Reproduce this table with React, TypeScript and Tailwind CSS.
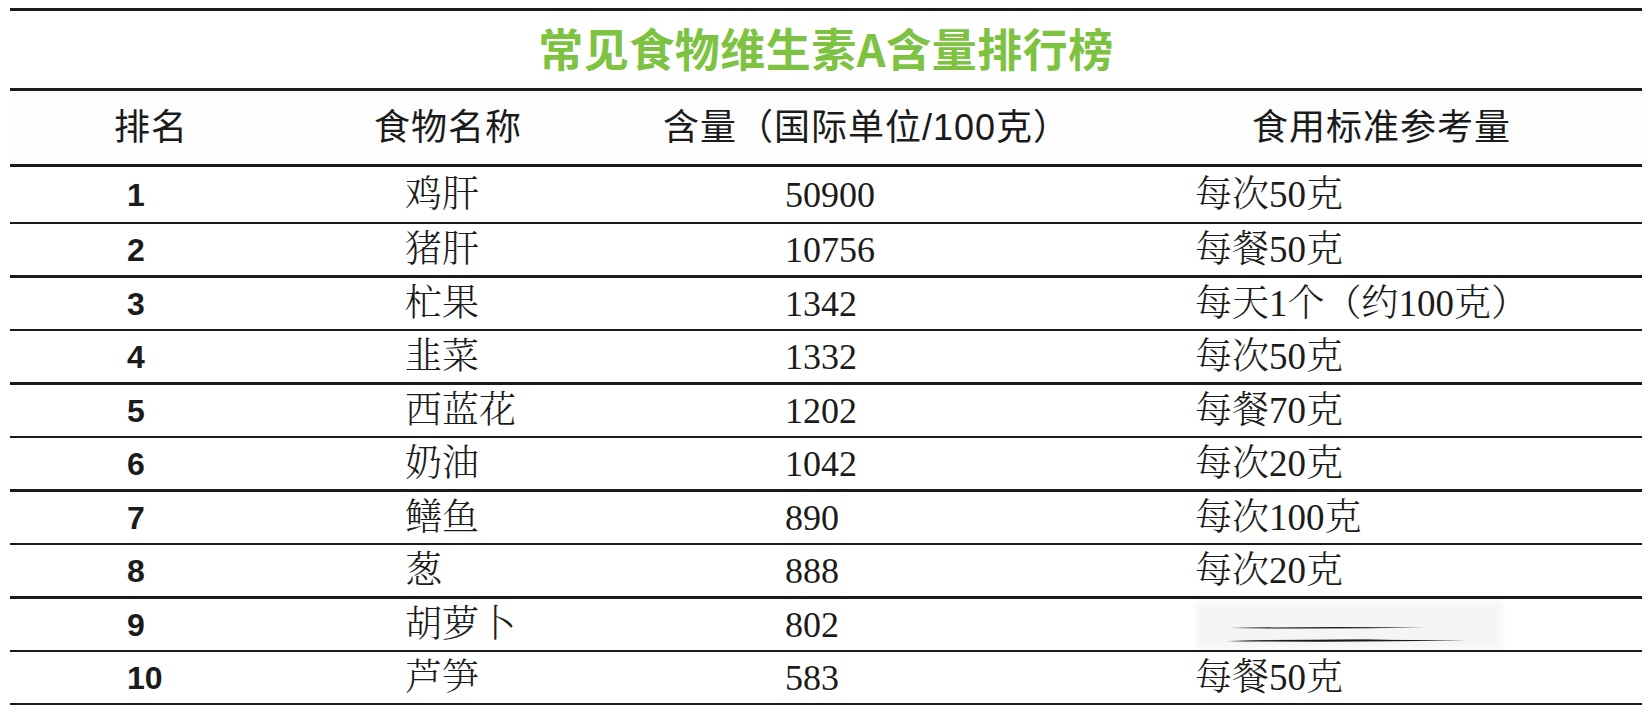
import React from "react";

const rows: [string, string, string, string | null][] = [
  ["1", "鸡肝", "50900", "每次50克"],
  ["2", "猪肝", "10756", "每餐50克"],
  ["3", "杧果", "1342", "每天1个（约100克）"],
  ["4", "韭菜", "1332", "每次50克"],
  ["5", "西蓝花", "1202", "每餐70克"],
  ["6", "奶油", "1042", "每次20克"],
  ["7", "鳝鱼", "890", "每次100克"],
  ["8", "葱", "888", "每次20克"],
  ["9", "胡萝卜", "802", null],
  ["10", "芦笋", "583", "每餐50克"],
];

const rowClass = [
  "h-[57px] border-b-2",
  "h-[54px] border-b-[3px]",
  "h-[53px] border-b-2",
  "h-[54px] border-b-[3px]",
  "h-[53px] border-b-2",
  "h-[54px] border-b-[3px]",
  "h-[53px] border-b-2",
  "h-[54px] border-b-[3px]",
  "h-[53px] border-b-2",
  "h-[53px] border-b-2",
];

const serif = '"Liberation Serif", "Noto Serif CJK SC", "Noto Sans CJK SC", serif';

function Scribble() {
  return (
    <svg width="312" height="51" viewBox="0 0 312 51" className="-ml-[2px] block">
      <defs>
        <filter id="soft" x="-10%" y="-20%" width="120%" height="140%">
          <feGaussianBlur stdDeviation="2.5" />
        </filter>
      </defs>
      <rect x="3" y="3" width="306" height="46" fill="#f5f5f5" filter="url(#soft)" />
      <path d="M37 29 Q130 27.2 232 28.6 Q130 30.2 37 29 Z" fill="#1c1c1c" />
      <path d="M33 42.2 Q150 39.6 274 41.6 Q150 43.4 33 42.2 Z" fill="#1a1a1a" />
      <path d="M36 41.5 Q120 40.2 200 40.6 Q120 42.6 36 41.5 Z" fill="#1a1a1a" />
    </svg>
  );
}

export default function App() {
  return (
    <div className="w-[1650px] h-[718px] bg-white pt-[8px] pl-[10px] overflow-hidden">
      <div className="w-[1632px] border-t-[3px] border-[#1b1b1b] text-[#1b1b1b]">
        {/* Title */}
        <div className="h-[80px] border-b-[3px] border-[#1b1b1b] flex items-center justify-center pb-[4px]">
          <span
            className="text-[45px] leading-none font-bold text-[#7dc241] tracking-[0.5px]"
            style={{ fontFamily: '"Noto Sans CJK SC", "Noto Sans", sans-serif' }}
          >
            常见食物维生素A含量排行榜
          </span>
        </div>

        {/* Header */}
        <div
          className="h-[76px] border-b-[3px] border-[#1b1b1b] grid grid-cols-[260px_289px_589px_1fr] pl-[104px] items-center text-[36px] leading-none tracking-[1px] bg-[#fdfdfd]"
          style={{ fontFamily: '"Liberation Sans", "Noto Sans CJK SC", sans-serif' }}
        >
          <div>排名</div>
          <div>食物名称</div>
          <div>含量（国际单位/100克）</div>
          <div>食用标准参考量</div>
        </div>

        {/* Rows */}
        {rows.map((r, i) => (
          <div
            key={r[0]}
            className={`${rowClass[i]} border-[#1b1b1b] grid grid-cols-[278px_380px_410px_1fr] pl-[117px] items-center`}
          >
            <div
              className="text-[32px] leading-none font-bold"
              style={{ fontFamily: '"Liberation Sans", Arial, sans-serif' }}
            >
              {r[0]}
            </div>
            <div className="text-[37px] leading-none font-light" style={{ fontFamily: serif }}>
              {r[1]}
            </div>
            <div className="text-[36px] leading-none" style={{ fontFamily: serif }}>
              {r[2]}
            </div>
            {r[3] === null ? (
              <div className="self-stretch flex items-center">
                <Scribble />
              </div>
            ) : (
              <div className="text-[37px] leading-none font-light" style={{ fontFamily: serif }}>
                {r[3]}
              </div>
            )}
          </div>
        ))}
      </div>
    </div>
  );
}
